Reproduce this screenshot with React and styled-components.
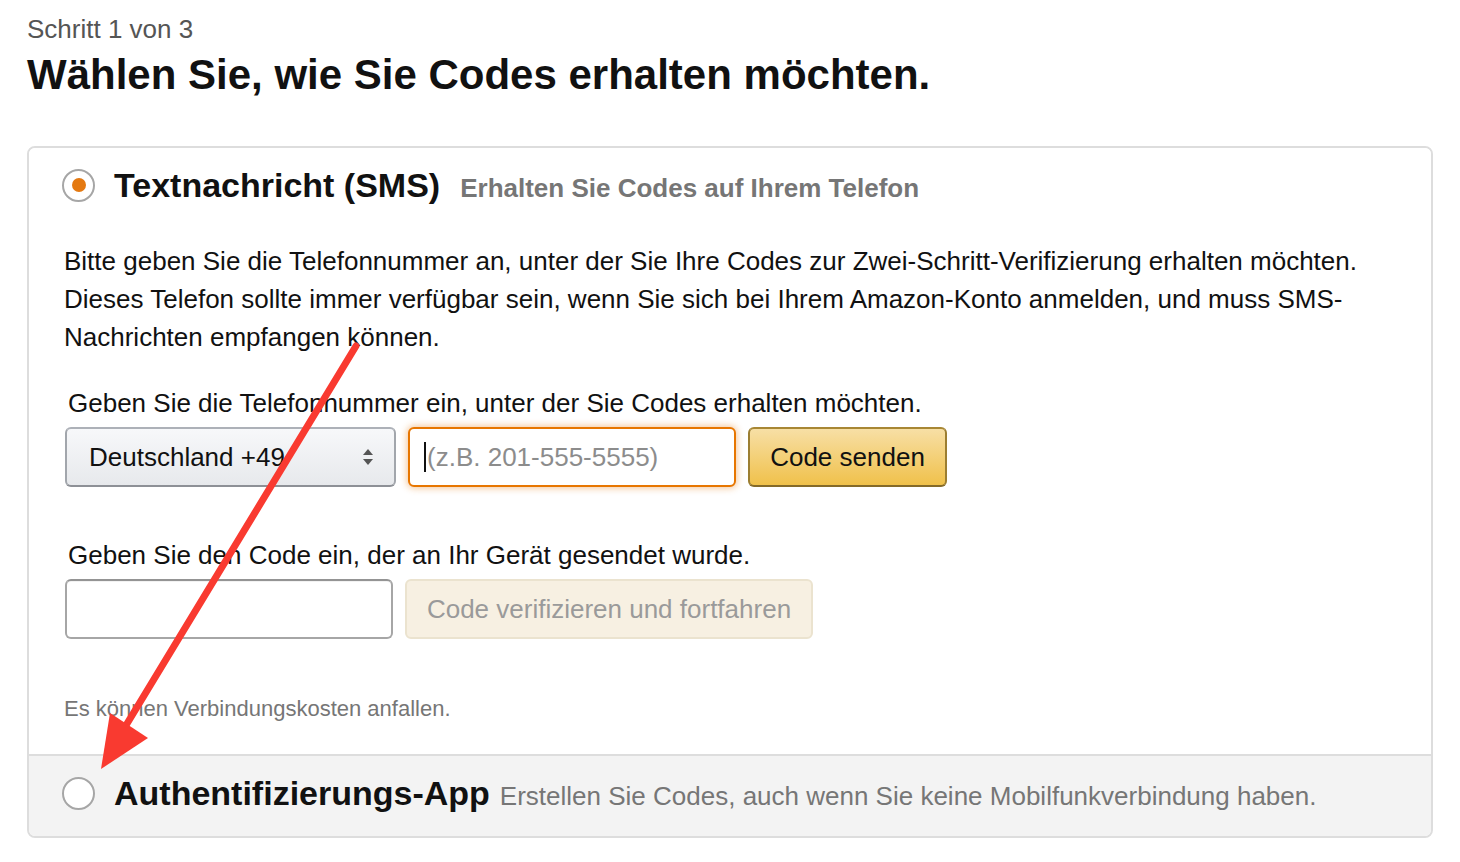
import React from "react";
import styled, { createGlobalStyle } from "styled-components";

const GlobalStyle = createGlobalStyle`
  html, body {
    margin: 0;
    padding: 0;
    background: #ffffff;
    font-family: "Liberation Sans", Arial, sans-serif;
    color: #111111;
  }
`;

const Page = styled.div`
  position: relative;
  width: 1460px;
  height: 862px;
  overflow: hidden;
  padding: 13px 27px 0 27px;
  box-sizing: border-box;
`;

const StepLabel = styled.div`
  font-size: 26px;
  line-height: 32px;
  color: #555555;
`;

const Heading = styled.h1`
  margin: 0;
  font-size: 42px;
  line-height: 60px;
  font-weight: bold;
  color: #111111;
`;

const Card = styled.div`
  margin-top: 41px;
  border: 2px solid #dddddd;
  border-radius: 8px;
  overflow: hidden;
`;

const Section = styled.div`
  padding: ${(p) => (p.$muted ? "15px 35px 21px" : "15px 35px 30px")};
  background: ${(p) => (p.$muted ? "#f3f3f3" : "#ffffff")};
  border-top: ${(p) => (p.$muted ? "2px solid #dddddd" : "none")};
`;

const OptionRow = styled.div`
  display: flex;
  align-items: center;
  height: 44px;
`;

const Radio = styled.span`
  box-sizing: border-box;
  width: 33px;
  height: 33px;
  margin-left: -2px;
  border-radius: 50%;
  border: 2px solid #a6a6a6;
  background: #ffffff;
  display: flex;
  align-items: center;
  justify-content: center;
  flex-shrink: 0;

  &::after {
    content: "";
    display: ${(p) => (p.$checked ? "block" : "none")};
    width: 14px;
    height: 14px;
    border-radius: 50%;
    background: #e47911;
  }
`;

const OptionTitle = styled.span`
  margin-left: 19px;
  font-size: 34px;
  font-weight: bold;
  color: #111111;
  white-space: nowrap;
`;

const OptionHint = styled.span`
  margin-left: ${(p) => (p.$bold ? "20px" : "10px")};
  margin-top: 6px;
  font-size: 26px;
  font-weight: ${(p) => (p.$bold ? "bold" : "normal")};
  color: #767676;
  white-space: nowrap;
`;

const Intro = styled.p`
  margin: 35px 0 0 0;
  font-size: 26px;
  line-height: 38px;
  color: #111111;
`;

const FieldLabel = styled.div`
  margin: ${(p) => (p.$first ? "28px" : "49px")} 0 5px 4px;
  font-size: 26px;
  line-height: 38px;
  color: #111111;
`;

const ControlRow = styled.div`
  display: flex;
  gap: 12px;
  height: 60px;
  padding-left: 1px;
`;

const Select = styled.div`
  box-sizing: border-box;
  width: 331px;
  height: 60px;
  padding: 0 20px 0 22px;
  border: 2px solid #adb1b8;
  border-color: #adb1b8 #a2a6ac #8d9096;
  border-radius: 6px;
  background: linear-gradient(to bottom, #f7f8fa, #e7e9ec);
  display: flex;
  align-items: center;
  justify-content: space-between;
  font-size: 26px;
  color: #111111;
`;

const TextBox = styled.div`
  box-sizing: border-box;
  width: 328px;
  height: 60px;
  padding: 0 14px;
  border-radius: 6px;
  background: #ffffff;
  display: flex;
  align-items: center;
  font-size: 26px;
  border: 2px solid ${(p) => (p.$focused ? "#e77600" : "#a6a6a6")};
  border-top-color: ${(p) => (p.$focused ? "#e77600" : "#949494")};
  box-shadow: ${(p) =>
    p.$focused ? "0 0 7px 1px rgba(228, 121, 17, 0.45)" : "inset 0 1px 0 rgba(0,0,0,0.05)"};
`;

const Caret = styled.span`
  display: inline-block;
  width: 2px;
  height: 30px;
  background: #111111;
  margin-right: 1px;
`;

const Placeholder = styled.span`
  color: #8c8c8c;
  white-space: nowrap;
`;

const Button = styled.button`
  box-sizing: border-box;
  height: 60px;
  width: ${(p) => p.$width}px;
  border-radius: 6px;
  font-family: "Liberation Sans", Arial, sans-serif;
  font-size: 26px;
  padding: 0;
  cursor: pointer;
  border: 2px solid;
  border-color: ${(p) =>
    p.$disabled ? "#ebe3cf" : "#a88734 #9c7e31 #846a29"};
  background: ${(p) =>
    p.$disabled
      ? "#f7f0e2"
      : "linear-gradient(to bottom, #f7dfa5, #f0c14b)"};
  color: ${(p) => (p.$disabled ? "#9a9a9a" : "#111111")};
`;

const Note = styled.div`
  margin-top: 55px;
  font-size: 22px;
  line-height: 30px;
  color: #767676;
`;

const ArrowLayer = styled.svg`
  position: absolute;
  left: 0;
  top: 0;
  pointer-events: none;
`;

const SelectArrows = () => (
  <svg width="12" height="20" viewBox="0 0 12 20">
    <path d="M6 2 L11 8 H1 Z" fill="#555" />
    <path d="M6 18 L11 12 H1 Z" fill="#555" />
  </svg>
);

const App = () => {
  return (
    <>
      <GlobalStyle />
      <Page>
        <StepLabel>Schritt 1 von 3</StepLabel>
        <Heading>Wählen Sie, wie Sie Codes erhalten möchten.</Heading>

        <Card>
          <Section>
            <OptionRow>
              <Radio $checked />
              <OptionTitle>Textnachricht (SMS)</OptionTitle>
              <OptionHint $bold>Erhalten Sie Codes auf Ihrem Telefon</OptionHint>
            </OptionRow>

            <Intro>
              Bitte geben Sie die Telefonnummer an, unter der Sie Ihre Codes zur
              Zwei-Schritt-Verifizierung erhalten möchten. Dieses Telefon sollte
              immer verfügbar sein, wenn Sie sich bei Ihrem Amazon-Konto anmelden,
              und muss SMS-Nachrichten empfangen können.
            </Intro>

            <FieldLabel $first>
              Geben Sie die Telefonnummer ein, unter der Sie Codes erhalten möchten.
            </FieldLabel>
            <ControlRow>
              <Select>
                <span>Deutschland +49</span>
                <SelectArrows />
              </Select>
              <TextBox $focused>
                <Caret />
                <Placeholder>(z.B. 201-555-5555)</Placeholder>
              </TextBox>
              <Button $width={199}>Code senden</Button>
            </ControlRow>

            <FieldLabel>
              Geben Sie den Code ein, der an Ihr Gerät gesendet wurde.
            </FieldLabel>
            <ControlRow>
              <TextBox />
              <Button $width={408} $disabled>
                Code verifizieren und fortfahren
              </Button>
            </ControlRow>

            <Note>Es können Verbindungskosten anfallen.</Note>
          </Section>

          <Section $muted>
            <OptionRow>
              <Radio />
              <OptionTitle>Authentifizierungs-App</OptionTitle>
              <OptionHint>
                Erstellen Sie Codes, auch wenn Sie keine Mobilfunkverbindung haben.
              </OptionHint>
            </OptionRow>
          </Section>
        </Card>

        <ArrowLayer width="1460" height="862" viewBox="0 0 1460 862">
          <line
            x1="356"
            y1="346"
            x2="125"
            y2="727"
            stroke="#f93a30"
            strokeWidth="7"
            strokeLinecap="round"
          />
          <polygon points="101,769 148,738 110,713" fill="#f93a30" />
        </ArrowLayer>
      </Page>
    </>
  );
};

export default App;
